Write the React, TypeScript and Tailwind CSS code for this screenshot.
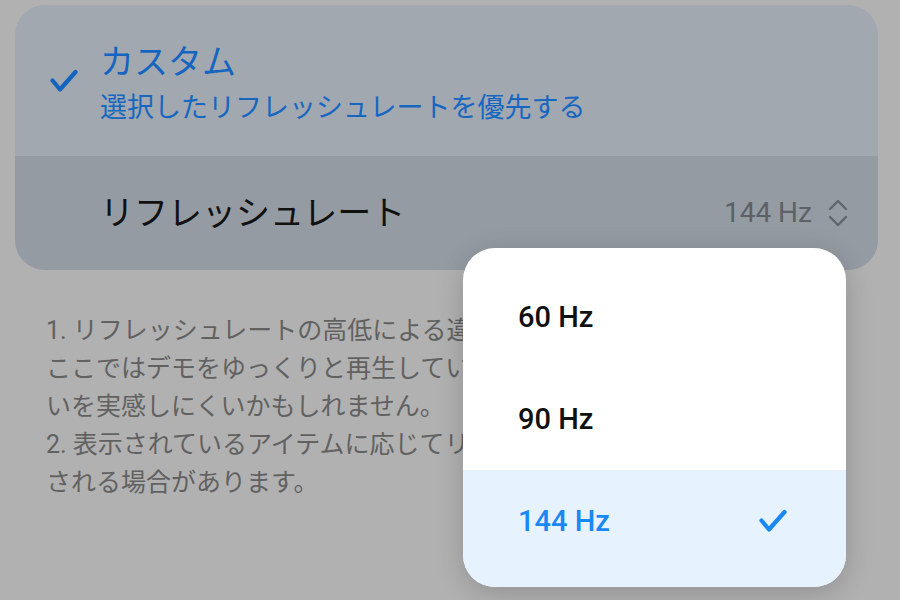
import React from "react";

const font = { fontFamily: '"Roboto", "Noto Sans CJK JP", sans-serif' };

const Check = ({ className }: { className: string }) => (
  <svg width="28" height="24" viewBox="0 0 28 24" fill="none" className={className}>
    <path
      d="M2.5 11.5 L10 20.5 L25.5 3"
      stroke="currentColor"
      strokeWidth="4.2"
      strokeLinecap="round"
      strokeLinejoin="round"
    />
  </svg>
);

const UpDown = () => (
  <svg width="20" height="30" viewBox="0 0 20 30" fill="none" className="text-[#5f656c]">
    <path d="M2 11 L10 3 L18 11" stroke="currentColor" strokeWidth="2.4" strokeLinecap="round" strokeLinejoin="round" />
    <path d="M2 19 L10 27 L18 19" stroke="currentColor" strokeWidth="2.4" strokeLinecap="round" strokeLinejoin="round" />
  </svg>
);

const options = ["60 Hz", "90 Hz", "144 Hz"];
const selected = "144 Hz";

const notes = [
  "1. リフレッシュレートの高低による違いを示すため、",
  "ここではデモをゆっくりと再生しているため、違",
  "いを実感しにくいかもしれません。",
  "2. 表示されているアイテムに応じてリフレッシュ",
  "される場合があります。",
];

export default function App() {
  return (
    <div className="relative w-[900px] h-[600px] overflow-hidden bg-[#b1b1b1]" style={font}>
      <div className="ml-[15px] mt-[5px] w-[863px] rounded-[30px] overflow-hidden">
        <div className="flex bg-[#a1a8b0] pl-[35px] pt-[37px] pb-[30px]">
          <div className="w-[50px] pt-[27px]">
            <Check className="text-[#1463bd]" />
          </div>
          <div className="flex flex-col gap-[8px]">
            <div className="text-[34px] leading-[40px] text-[#1565c0]">カスタム</div>
            <div className="text-[27px] leading-[36px] text-[#1767c0]">
              選択したリフレッシュレートを優先する
            </div>
          </div>
        </div>
        <div className="flex h-[114px] items-center justify-between bg-[#949ba3] pl-[85px] pr-[30px]">
          <div className="text-[34px] leading-[40px] text-[#111111]">リフレッシュレート</div>
          <div className="flex items-center gap-[16px]">
            <span className="text-[28px] leading-[32px] text-[#5c6168]">144 Hz</span>
            <UpDown />
          </div>
        </div>
      </div>

      <div className="mt-[42px] pl-[46px] text-[25px] leading-[38px] text-[#616161]">
        {notes.map((line) => (
          <div key={line} className="whitespace-nowrap">
            {line}
          </div>
        ))}
      </div>

      <div className="absolute left-[463px] top-[248px] w-[383px] h-[339px] overflow-hidden rounded-[32px] bg-white pt-[18px] shadow-[0_6px_28px_rgba(0,0,0,0.18)]">
        {options.map((opt, i) => {
          const active = opt === selected;
          const last = i === options.length - 1;
          return (
            <div
              key={opt}
              className={
                "flex items-center justify-between pl-[55px] pr-[59px] " +
                (last ? "h-[120px] pb-[18px] " : "h-[102px] ") +
                (active ? "bg-[#e6f2fd]" : "")
              }
            >
              <span
                className={
                  "text-[29px] leading-[32px] font-medium " +
                  (active ? "text-[#1a88f2]" : "text-[#111111]")
                }
              >
                {opt}
              </span>
              {active && <Check className="text-[#1a88f2]" />}
            </div>
          );
        })}
      </div>
    </div>
  );
}
